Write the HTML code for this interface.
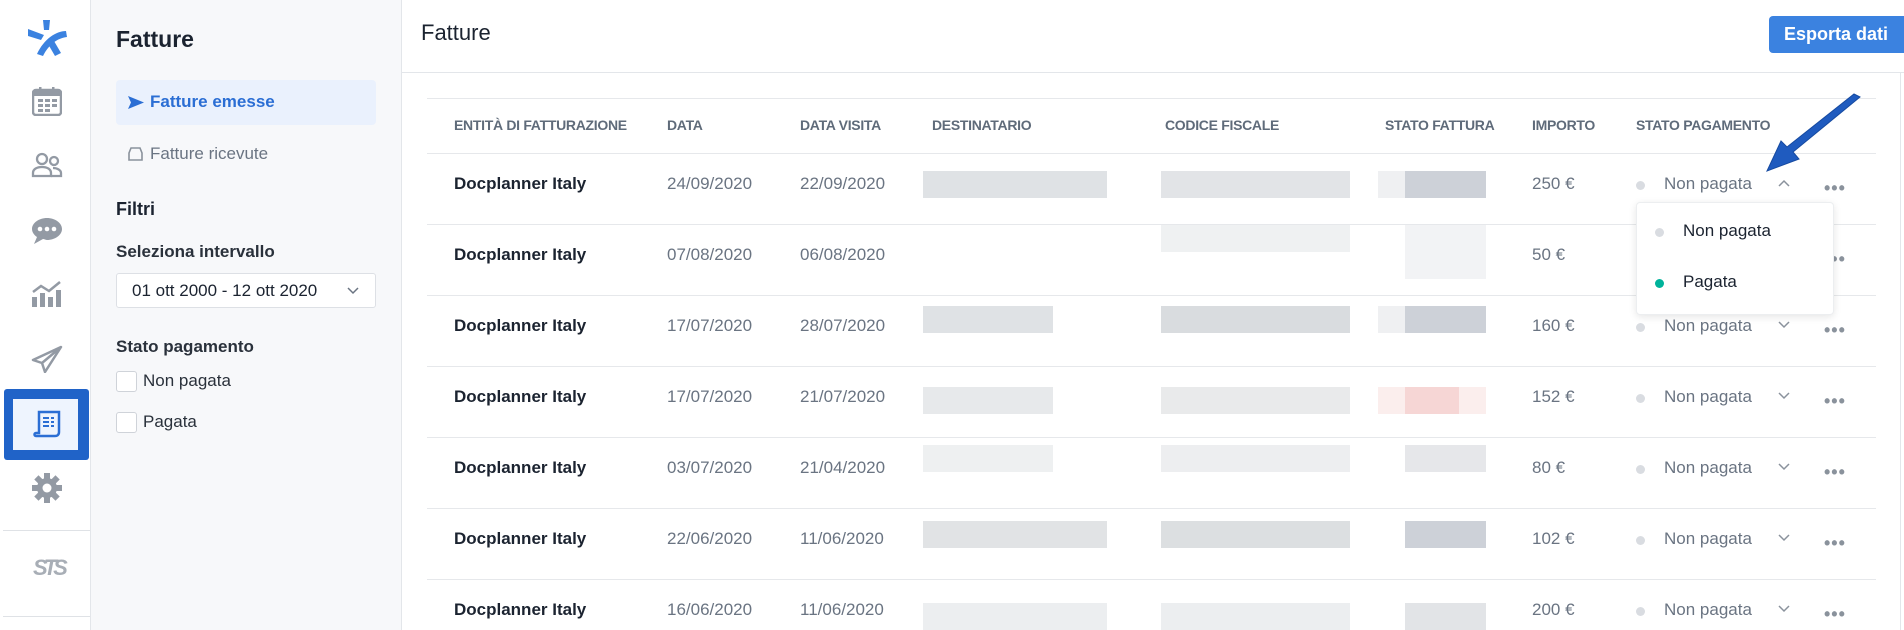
<!DOCTYPE html>
<html><head><meta charset="utf-8"><style>
*{box-sizing:border-box;margin:0;padding:0}
body{width:1904px;height:630px;overflow:hidden;background:#fff;font-family:"Liberation Sans",Arial,sans-serif;position:relative;color:#1b2330}
.a{position:absolute}
.nav{left:0;top:0;width:91px;height:630px;background:#fff;border-right:1px solid #e3e6ea}
.side{left:91px;top:0;width:311px;height:630px;background:#f7f8fa;border-right:1px solid #e3e6ea}
.hd{font-size:14px;font-weight:bold;color:#5f6b7a;top:117px;letter-spacing:-0.3px}
.c{font-size:17px;color:#6a7482}
.b{font-size:17px;font-weight:bold;color:#1b2330}
.line{height:1px;background:#e6e8eb;left:427px;width:1449px}
.blk{height:27px}
.dot{width:9px;height:9px;border-radius:50%;background:#d9dce1}
.more{font-size:18px;color:#8a929c;letter-spacing:1px;font-weight:bold}
</style></head><body>
<div class="a nav"></div>
<!-- logo -->
<svg class="a" style="left:26px;top:17px" width="42" height="42" viewBox="0 0 42 42"><g fill="#3b82e0"><path d="M17 3h7l-1 10h-5z"/><path d="M2 12l16 6-3 5-13-4z"/><path d="M40 14c-10 0-22 8-29 23l6 2c6-12 15-18 24-19z"/><path d="M22 27l6-3 7 12-6 3z"/></g></svg>
<!-- calendar -->
<svg class="a" style="left:32px;top:86px" width="30" height="30" viewBox="0 0 30 30"><rect x="1" y="4" width="28" height="25" rx="3" fill="none" stroke="#939aa4" stroke-width="2.5"/><rect x="1" y="4" width="28" height="6" fill="#939aa4"/><rect x="7" y="1" width="2.5" height="5" fill="#939aa4"/><rect x="20" y="1" width="2.5" height="5" fill="#939aa4"/><g fill="#939aa4"><rect x="6" y="13" width="5" height="3"/><rect x="13" y="13" width="5" height="3"/><rect x="20" y="13" width="5" height="3"/><rect x="6" y="18" width="5" height="3"/><rect x="13" y="18" width="5" height="3"/><rect x="20" y="18" width="5" height="3"/><rect x="6" y="23" width="5" height="3"/><rect x="13" y="23" width="5" height="3"/></g></svg>
<!-- people -->
<svg class="a" style="left:31px;top:152px" width="32" height="26" viewBox="0 0 32 26"><g fill="none" stroke="#939aa4" stroke-width="2.3"><circle cx="11" cy="7" r="5"/><path d="M2 24v-3c0-4 4-6 9-6s9 2 9 6v3z"/><circle cx="23" cy="9" r="4"/><path d="M22 16c4 0 8 2 8 5v3h-10"/></g></svg>
<!-- chat -->
<svg class="a" style="left:31px;top:217px" width="32" height="28" viewBox="0 0 32 28"><path d="M16 1C8 1 1 6 1 12c0 3 2 6 5 8l-3 7 9-5c1 0 3 1 4 1 8 0 15-5 15-11S24 1 16 1z" fill="#939aa4"/><circle cx="9" cy="12" r="2.3" fill="#fff"/><circle cx="16" cy="12" r="2.3" fill="#fff"/><circle cx="23" cy="12" r="2.3" fill="#fff"/></svg>
<!-- chart -->
<svg class="a" style="left:31px;top:280px" width="32" height="28" viewBox="0 0 32 28"><g fill="#939aa4"><rect x="1" y="17" width="5" height="10"/><rect x="9" y="13" width="5" height="14"/><rect x="17" y="17" width="5" height="10"/><rect x="25" y="10" width="5" height="17"/></g><path d="M2 12l8-6 8 5 11-9" fill="none" stroke="#939aa4" stroke-width="2.5"/></svg>
<!-- send -->
<svg class="a" style="left:31px;top:345px" width="32" height="28" viewBox="0 0 32 28"><path d="M30 2L2 15l9 3 3 9 16-25zM11 18l19-16" fill="none" stroke="#939aa4" stroke-width="2.5" stroke-linejoin="round"/></svg>
<!-- active -->
<div class="a" style="left:4px;top:389px;width:85px;height:71px;background:#2063c8;border-radius:3px"></div>
<div class="a" style="left:13px;top:399px;width:65px;height:51px;background:#eef4fe"></div>
<svg class="a" style="left:33px;top:410px" width="28" height="28" viewBox="0 0 28 28"><path d="M6 2h20v20c0 3-2 4-4 4H3c-2 0-2-3 0-3h3z" fill="none" stroke="#2b6ed4" stroke-width="2.5"/><g fill="#2b6ed4"><rect x="10" y="7" width="6" height="2"/><rect x="18" y="7" width="3" height="2"/><rect x="10" y="11" width="6" height="2"/><rect x="18" y="11" width="3" height="2"/><rect x="10" y="15" width="6" height="2"/><rect x="18" y="15" width="3" height="2"/></g></svg>
<!-- gear -->
<svg class="a" style="left:32px;top:473px" width="30" height="30" viewBox="0 0 30 30"><g fill="#939aa4"><circle cx="15" cy="15" r="10"/><rect x="12" y="0" width="6" height="30"/><rect x="0" y="12" width="30" height="6"/><rect x="12" y="0" width="6" height="30" transform="rotate(45 15 15)"/><rect x="12" y="0" width="6" height="30" transform="rotate(-45 15 15)"/></g><circle cx="15" cy="15" r="4.5" fill="#fff"/></svg>
<div class="a" style="left:3px;top:530px;width:87px;height:1px;background:#dfe2e6"></div>
<div class="a" style="left:33px;top:555px;font-size:22px;font-weight:bold;font-style:italic;color:#a8aeb6;letter-spacing:-4px">STS</div>
<div class="a" style="left:3px;top:616px;width:87px;height:1px;background:#dfe2e6"></div>

<div class="a side"></div>
<div class="a" style="left:116px;top:26px;font-size:23px;font-weight:bold">Fatture</div>
<div class="a" style="left:116px;top:80px;width:260px;height:45px;background:#eaf1fd;border-radius:4px"></div>
<svg class="a" style="left:128px;top:96px" width="16" height="13" viewBox="0 0 16 13"><path d="M0 0l16 6.5L0 13l3-6.5z" fill="#2b6ed4"/></svg>
<div class="a" style="left:150px;top:92px;font-size:17px;font-weight:bold;color:#2b6ed4">Fatture emesse</div>
<svg class="a" style="left:128px;top:147px" width="15" height="14" viewBox="0 0 15 14"><path d="M1 6l2-5h9l2 5v7H1z" fill="none" stroke="#8a929c" stroke-width="1.6"/></svg>
<div class="a" style="left:150px;top:144px;font-size:17px;color:#6a7482">Fatture ricevute</div>
<div class="a" style="left:116px;top:199px;font-size:18px;font-weight:bold">Filtri</div>
<div class="a" style="left:116px;top:242px;font-size:17px;font-weight:bold;color:#2a313b">Seleziona intervallo</div>
<div class="a" style="left:116px;top:273px;width:260px;height:35px;background:#fff;border:1px solid #dde0e5;border-radius:3px"></div>
<div class="a" style="left:132px;top:281px;font-size:17px;color:#1b2330">01 ott 2000 - 12 ott 2020</div>
<svg class="a" style="left:347px;top:287px" width="12" height="8" viewBox="0 0 12 8"><path d="M1 1l5 5 5-5" fill="none" stroke="#6a7482" stroke-width="1.5"/></svg>
<div class="a" style="left:116px;top:337px;font-size:17px;font-weight:bold;color:#2a313b">Stato pagamento</div>
<div class="a" style="left:116px;top:371px;width:21px;height:21px;border:1px solid #cfd3d9;border-radius:3px;background:#fff"></div>
<div class="a" style="left:143px;top:371px;font-size:17px;color:#2a313b">Non pagata</div>
<div class="a" style="left:116px;top:412px;width:21px;height:21px;border:1px solid #cfd3d9;border-radius:3px;background:#fff"></div>
<div class="a" style="left:143px;top:412px;font-size:17px;color:#2a313b">Pagata</div>

<div class="a" style="left:421px;top:20px;font-size:22px;color:#1b2330">Fatture</div>
<div class="a" style="left:1769px;top:16px;width:140px;height:37px;background:#3b82e0;border-radius:4px"></div>
<div class="a" style="left:1784px;top:24px;font-size:18px;font-weight:bold;color:#fff">Esporta dati</div>
<div class="a" style="left:402px;top:72px;width:1502px;height:1px;background:#e3e6ea"></div>
<div class="a" style="left:1900px;top:72px;width:1px;height:558px;background:#e3e6ea"></div>

<div class="a line" style="top:98px"></div>
<div class="a hd" style="left:454px">ENTITÀ DI FATTURAZIONE</div>
<div class="a hd" style="left:667px">DATA</div>
<div class="a hd" style="left:800px">DATA VISITA</div>
<div class="a hd" style="left:932px">DESTINATARIO</div>
<div class="a hd" style="left:1165px">CODICE FISCALE</div>
<div class="a hd" style="left:1385px">STATO FATTURA</div>
<div class="a hd" style="left:1532px">IMPORTO</div>
<div class="a hd" style="left:1636px">STATO PAGAMENTO</div>
<div class="a line" style="top:153px"></div>

<div class="a line" style="top:224px"></div><div class="a line" style="top:295px"></div><div class="a line" style="top:366px"></div><div class="a line" style="top:437px"></div><div class="a line" style="top:508px"></div><div class="a line" style="top:579px"></div>

<div class="a b" style="left:454px;top:174px">Docplanner Italy</div><div class="a c" style="left:667px;top:174px">24/09/2020</div><div class="a c" style="left:800px;top:174px">22/09/2020</div><div class="a c" style="left:1532px;top:174px">250 €</div>
<div class="a b" style="left:454px;top:245px">Docplanner Italy</div><div class="a c" style="left:667px;top:245px">07/08/2020</div><div class="a c" style="left:800px;top:245px">06/08/2020</div><div class="a c" style="left:1532px;top:245px">50 €</div>
<div class="a b" style="left:454px;top:316px">Docplanner Italy</div><div class="a c" style="left:667px;top:316px">17/07/2020</div><div class="a c" style="left:800px;top:316px">28/07/2020</div><div class="a c" style="left:1532px;top:316px">160 €</div>
<div class="a b" style="left:454px;top:387px">Docplanner Italy</div><div class="a c" style="left:667px;top:387px">17/07/2020</div><div class="a c" style="left:800px;top:387px">21/07/2020</div><div class="a c" style="left:1532px;top:387px">152 €</div>
<div class="a b" style="left:454px;top:458px">Docplanner Italy</div><div class="a c" style="left:667px;top:458px">03/07/2020</div><div class="a c" style="left:800px;top:458px">21/04/2020</div><div class="a c" style="left:1532px;top:458px">80 €</div>
<div class="a b" style="left:454px;top:529px">Docplanner Italy</div><div class="a c" style="left:667px;top:529px">22/06/2020</div><div class="a c" style="left:800px;top:529px">11/06/2020</div><div class="a c" style="left:1532px;top:529px">102 €</div>
<div class="a b" style="left:454px;top:600px">Docplanner Italy</div><div class="a c" style="left:667px;top:600px">16/06/2020</div><div class="a c" style="left:800px;top:600px">11/06/2020</div><div class="a c" style="left:1532px;top:600px">200 €</div>

<div class="a blk" style="left:923px;top:171px;width:184px;background:#dfe2e5"></div><div class="a blk" style="left:1161px;top:171px;width:189px;background:#e2e4e7"></div><div class="a blk" style="left:1378px;top:171px;width:108px;background:#eff0f2"></div><div class="a blk" style="left:1405px;top:171px;width:81px;background:#cdd1d8"></div>
<div class="a" style="left:1161px;top:225px;width:189px;height:27px;background:#eff1f2"></div><div class="a" style="left:1405px;top:225px;width:81px;height:54px;background:#f2f3f5"></div>
<div class="a blk" style="left:923px;top:306px;width:130px;background:#dfe2e5"></div><div class="a blk" style="left:1161px;top:306px;width:189px;background:#d9dcdf"></div><div class="a blk" style="left:1378px;top:306px;width:108px;background:#eff0f2"></div><div class="a blk" style="left:1405px;top:306px;width:81px;background:#cdd1d8"></div>
<div class="a blk" style="left:923px;top:387px;width:130px;background:#e7e9eb"></div><div class="a blk" style="left:1161px;top:387px;width:189px;background:#e9eaeb"></div><div class="a blk" style="left:1378px;top:387px;width:108px;background:#fbeeed"></div><div class="a blk" style="left:1405px;top:387px;width:54px;background:#f6d6d5"></div>
<div class="a blk" style="left:923px;top:445px;width:130px;background:#eef0f1"></div><div class="a blk" style="left:1161px;top:445px;width:189px;background:#edeef0"></div><div class="a blk" style="left:1405px;top:445px;width:81px;background:#e6e7ea"></div>
<div class="a blk" style="left:923px;top:521px;width:184px;background:#e1e3e5"></div><div class="a blk" style="left:1161px;top:521px;width:189px;background:#dcdfe1"></div><div class="a blk" style="left:1405px;top:521px;width:81px;background:#cdd1d8"></div>
<div class="a blk" style="left:923px;top:603px;width:184px;background:#eceef0"></div><div class="a blk" style="left:1161px;top:603px;width:189px;background:#eceef0"></div><div class="a blk" style="left:1405px;top:603px;width:81px;background:#e2e4e7"></div>

<div class="a dot" style="left:1636px;top:181px"></div><div class="a c" style="left:1664px;top:174px">Non pagata</div>
<svg class="a" style="left:1778px;top:179px" width="12" height="8" viewBox="0 0 12 8"><path d="M1 7l5-5 5 5" fill="none" stroke="#8a929c" stroke-width="1.5"/></svg>
<div class="a more" style="left:1824px;top:178px">•••</div>
<div class="a more" style="left:1824px;top:249px">•••</div>
<div class="a dot" style="left:1636px;top:323px"></div><div class="a c" style="left:1664px;top:316px">Non pagata</div><svg class="a" style="left:1778px;top:321px" width="12" height="8" viewBox="0 0 12 8"><path d="M1 1l5 5 5-5" fill="none" stroke="#8a929c" stroke-width="1.5"/></svg><div class="a more" style="left:1824px;top:320px">•••</div>
<div class="a dot" style="left:1636px;top:394px"></div><div class="a c" style="left:1664px;top:387px">Non pagata</div><svg class="a" style="left:1778px;top:392px" width="12" height="8" viewBox="0 0 12 8"><path d="M1 1l5 5 5-5" fill="none" stroke="#8a929c" stroke-width="1.5"/></svg><div class="a more" style="left:1824px;top:391px">•••</div>
<div class="a dot" style="left:1636px;top:465px"></div><div class="a c" style="left:1664px;top:458px">Non pagata</div><svg class="a" style="left:1778px;top:463px" width="12" height="8" viewBox="0 0 12 8"><path d="M1 1l5 5 5-5" fill="none" stroke="#8a929c" stroke-width="1.5"/></svg><div class="a more" style="left:1824px;top:462px">•••</div>
<div class="a dot" style="left:1636px;top:536px"></div><div class="a c" style="left:1664px;top:529px">Non pagata</div><svg class="a" style="left:1778px;top:534px" width="12" height="8" viewBox="0 0 12 8"><path d="M1 1l5 5 5-5" fill="none" stroke="#8a929c" stroke-width="1.5"/></svg><div class="a more" style="left:1824px;top:533px">•••</div>
<div class="a dot" style="left:1636px;top:607px"></div><div class="a c" style="left:1664px;top:600px">Non pagata</div><svg class="a" style="left:1778px;top:605px" width="12" height="8" viewBox="0 0 12 8"><path d="M1 1l5 5 5-5" fill="none" stroke="#8a929c" stroke-width="1.5"/></svg><div class="a more" style="left:1824px;top:604px">•••</div>

<div class="a" style="left:1636px;top:202px;width:198px;height:113px;background:#fff;border:1px solid #eceef0;border-radius:4px;box-shadow:0 2px 8px rgba(0,0,0,0.1)"></div>
<div class="a dot" style="left:1655px;top:228px"></div><div class="a" style="left:1683px;top:221px;font-size:17px;color:#1b2330">Non pagata</div>
<div class="a dot" style="left:1655px;top:279px;background:#00b39b"></div><div class="a" style="left:1683px;top:272px;font-size:17px;color:#1b2330">Pagata</div>

<svg class="a" style="left:1753px;top:90px" width="110" height="90" viewBox="0 0 110 90"><path d="M107 7L40 62l6 7-32 12 14-30 6 6 67-53z" fill="#1f5bbf" stroke="#164aa0" stroke-width="1"/></svg>
</body></html>
